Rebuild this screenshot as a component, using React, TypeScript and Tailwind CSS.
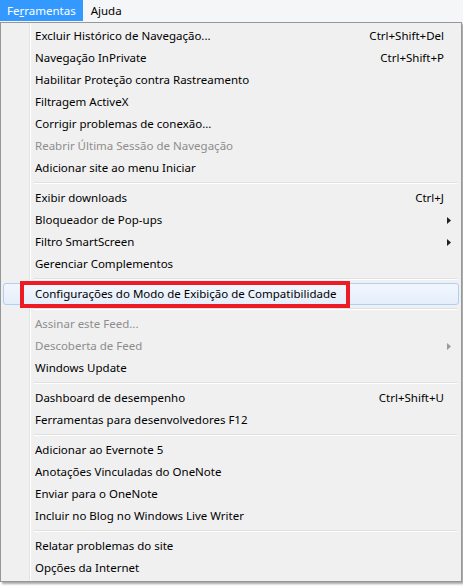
import React from 'react';

type Entry =
  | { kind: 'item'; label: string; shortcut?: string; sub?: boolean; disabled?: boolean; hot?: boolean }
  | { kind: 'sep' };

const items: Entry[] = [
  { kind: 'item', label: 'Excluir Histórico de Navegação...', shortcut: 'Ctrl+Shift+Del' },
  { kind: 'item', label: 'Navegação InPrivate', shortcut: 'Ctrl+Shift+P' },
  { kind: 'item', label: 'Habilitar Proteção contra Rastreamento' },
  { kind: 'item', label: 'Filtragem ActiveX' },
  { kind: 'item', label: 'Corrigir problemas de conexão...' },
  { kind: 'item', label: 'Reabrir Última Sessão de Navegação', disabled: true },
  { kind: 'item', label: 'Adicionar site ao menu Iniciar' },
  { kind: 'sep' },
  { kind: 'item', label: 'Exibir downloads', shortcut: 'Ctrl+J' },
  { kind: 'item', label: 'Bloqueador de Pop-ups', sub: true },
  { kind: 'item', label: 'Filtro SmartScreen', sub: true },
  { kind: 'item', label: 'Gerenciar Complementos' },
  { kind: 'sep' },
  { kind: 'item', label: 'Configurações do Modo de Exibição de Compatibilidade', hot: true },
  { kind: 'sep' },
  { kind: 'item', label: 'Assinar este Feed...', disabled: true },
  { kind: 'item', label: 'Descoberta de Feed', sub: true, disabled: true },
  { kind: 'item', label: 'Windows Update' },
  { kind: 'sep' },
  { kind: 'item', label: 'Dashboard de desempenho', shortcut: 'Ctrl+Shift+U' },
  { kind: 'item', label: 'Ferramentas para desenvolvedores F12' },
  { kind: 'sep' },
  { kind: 'item', label: 'Adicionar ao Evernote 5' },
  { kind: 'item', label: 'Anotações Vinculadas do OneNote' },
  { kind: 'item', label: 'Enviar para o OneNote' },
  { kind: 'item', label: 'Incluir no Blog no Windows Live Writer' },
  { kind: 'sep' },
  { kind: 'item', label: 'Relatar problemas do site' },
  { kind: 'item', label: 'Opções da Internet' },
];

const Arrow = ({ color }: { color: string }) => (
  <svg width="4" height="7" viewBox="0 0 4 7" className="absolute right-[8px] top-[8px]">
    <path d="M0 0 L4 3.5 L0 7 Z" fill={color} />
  </svg>
);

export default function App() {
  return (
    <div
      className="w-[463px] h-[586px] bg-white overflow-hidden text-[11.5px] text-black"
      style={{ fontFamily: '"Noto Sans", "Open Sans", sans-serif' }}
    >
      {/* menu bar */}
      <div className="h-[22px] flex bg-[#f5f6f7]">
        <div className="h-[21px] px-[7px] flex items-center bg-[#3399ff] text-white">
          <span>
            Fe<span className="underline">r</span>ramentas
          </span>
        </div>
        <div className="h-[21px] px-[8px] flex items-center">
          <span>
            A<span className="underline">j</span>uda
          </span>
        </div>
      </div>

      {/* dropdown */}
      <div className="relative w-[462px] border border-[#979797] bg-[#f0f0f0] px-[2px] py-[2px] shadow-[2px_2px_2px_rgba(0,0,0,0.35)]">
        {/* icon gutter line */}
        <div className="absolute left-[28px] top-0 bottom-0 w-[2px] border-l border-[#e2e3e3] border-r border-r-white" />
        {items.map((it, i) =>
          it.kind === 'sep' ? (
            <div key={i} className="h-[8px] flex items-center pl-[31px] pr-[2px] relative">
              <div className="w-full h-[2px] border-t border-[#e0e0e0] border-b border-b-white" />
            </div>
          ) : (
            <div
              key={i}
              className={
                'relative h-[22px] flex items-center pr-[15px] whitespace-nowrap ' +
                (it.hot
                  ? 'pl-[31px] rounded-[3px] border border-[#aecff7] bg-gradient-to-b from-[#f2f7fd] to-[#e5eefb] '
                  : 'pl-[32px] ') +
                (it.disabled ? 'text-[#8d8d8d]' : 'text-black')
              }
            >
              <span>{it.label}</span>
              {it.shortcut && <span className="ml-auto">{it.shortcut}</span>}
              {it.sub && <Arrow color={it.disabled ? '#9a9a9a' : '#222'} />}
              {it.hot && (
                <div className="absolute -top-[3px] left-[16px] w-[330px] h-[27px] border-4 border-[#ed1c24]" />
              )}
            </div>
          )
        )}
      </div>
    </div>
  );
}
